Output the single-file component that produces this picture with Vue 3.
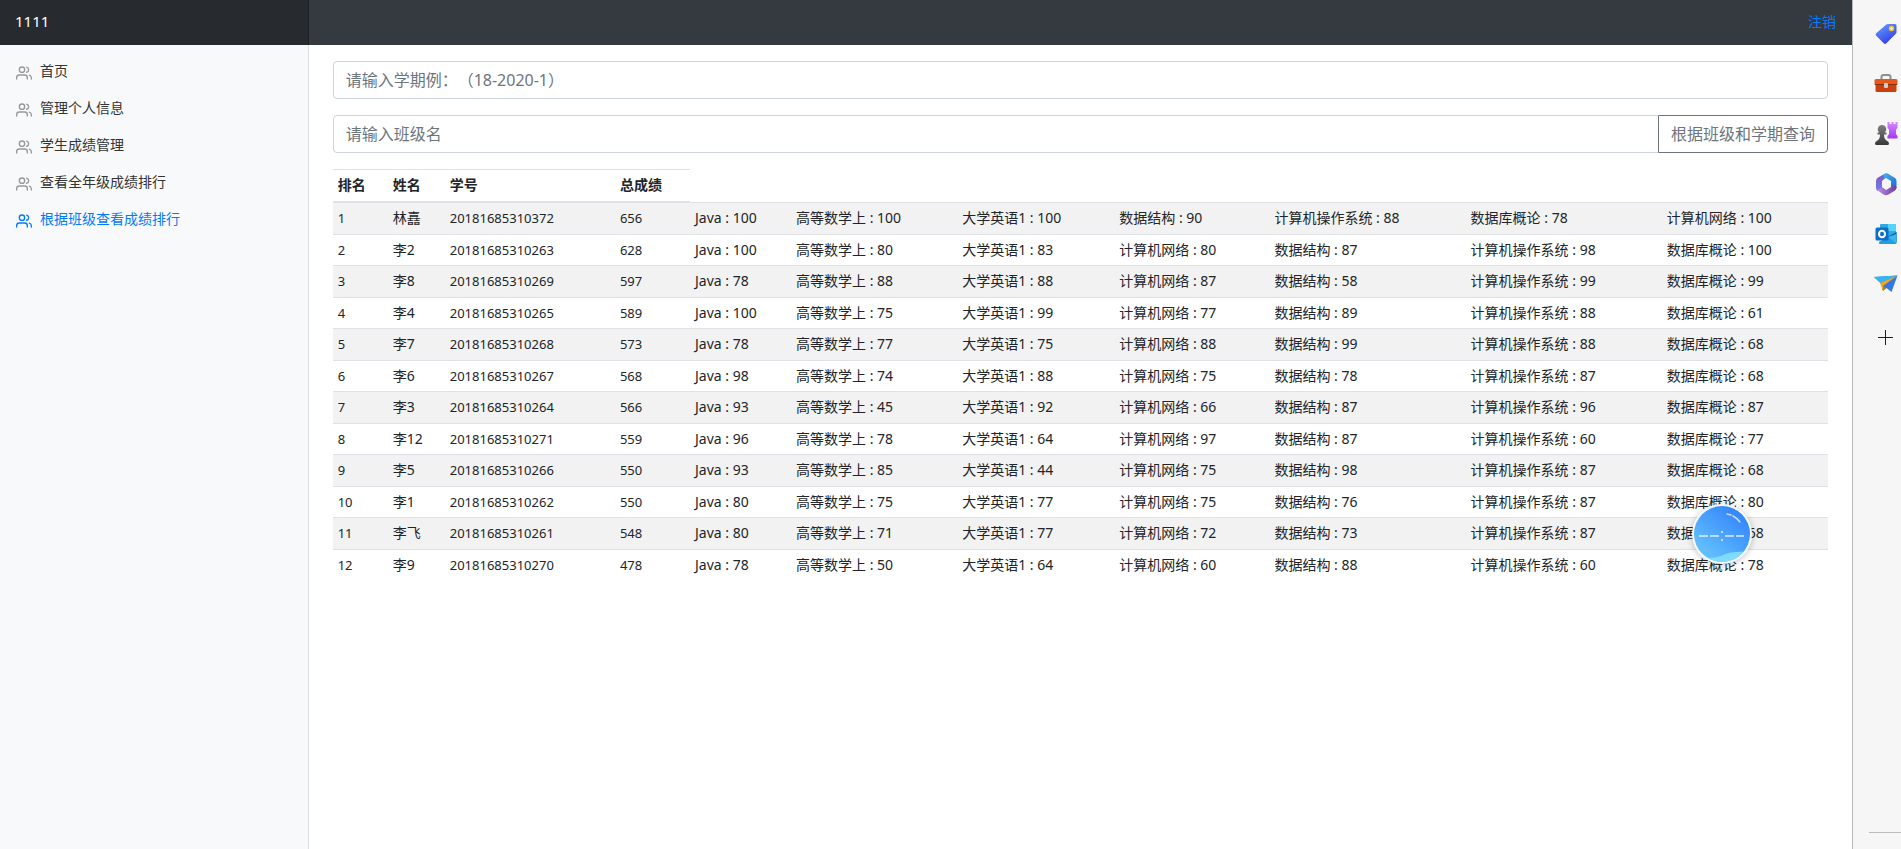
<script setup>
const menu = ['首页', '管理个人信息', '学生成绩管理', '查看全年级成绩排行', '根据班级查看成绩排行']
const current = 4
const heads = ['排名', '姓名', '学号', '总成绩']
const J = 'Java', G = '高等数学上', D = '大学英语1', W = '计算机网络', S = '数据结构', C = '计算机操作系统', K = '数据库概论'
const usual = [J, G, D, W, S, C, K]
const source = [
  ['林嚞', '20181685310372', 656, [100, 100, 100, 90, 88, 78, 100], [J, G, D, S, C, K, W]],
  ['李2', '20181685310263', 628, [100, 80, 83, 80, 87, 98, 100]],
  ['李8', '20181685310269', 597, [78, 88, 88, 87, 58, 99, 99]],
  ['李4', '20181685310265', 589, [100, 75, 99, 77, 89, 88, 61]],
  ['李7', '20181685310268', 573, [78, 77, 75, 88, 99, 88, 68]],
  ['李6', '20181685310267', 568, [98, 74, 88, 75, 78, 87, 68]],
  ['李3', '20181685310264', 566, [93, 45, 92, 66, 87, 96, 87]],
  ['李12', '20181685310271', 559, [96, 78, 64, 97, 87, 60, 77]],
  ['李5', '20181685310266', 550, [93, 85, 44, 75, 98, 87, 68]],
  ['李1', '20181685310262', 550, [80, 75, 77, 75, 76, 87, 80]],
  ['李飞', '20181685310261', 548, [80, 71, 77, 72, 73, 87, 68]],
  ['李9', '20181685310270', 478, [78, 50, 64, 60, 88, 60, 78]],
]
const rows = source.map(([name, no, total, scores, subjects = usual], i) => ({
  rank: i + 1, name, no, total,
  scores: scores.map((score, k) => ({ subject: subjects[k], score })),
}))
</script>

<template>
  <div class="window">
    <div class="page">
      <header class="bar">
        <a class="brand" href="#">1111</a>
        <a class="logout" href="#">注销</a>
      </header>
      <nav class="sidebar">
        <a v-for="(item, i) in menu" :key="item" href="#" class="item" :class="{ active: i === current }">
          <svg viewBox="0 0 24 24" width="16" height="16" fill="none" stroke="currentColor" stroke-width="2" stroke-linecap="round" stroke-linejoin="round" aria-hidden="true">
            <path d="M17 21v-2a4 4 0 0 0-4-4H5a4 4 0 0 0-4 4v2" />
            <circle cx="9" cy="7" r="4" />
            <path d="M23 21v-2a4 4 0 0 0-3-3.87M16 3.13a4 4 0 0 1 0 7.75" />
          </svg>
          <span>{{ item }}</span>
        </a>
      </nav>
      <main class="content">
        <input class="field" type="text" aria-label="学期" placeholder="请输入学期例：（18-2020-1）" />
        <div class="group">
          <input class="field" type="text" aria-label="班级名" placeholder="请输入班级名" />
          <button type="button" class="search">根据班级和学期查询</button>
        </div>
        <table class="scores">
          <colgroup>
            <col class="c-rank" /><col class="c-name" /><col class="c-no" /><col class="c-total" />
            <col class="c-java" /><col class="c-wide" /><col class="c-english" /><col class="c-mid" />
            <col class="c-long" /><col class="c-long" /><col class="c-wide" />
          </colgroup>
          <thead>
            <tr><th v-for="h in heads" :key="h" scope="col">{{ h }}</th></tr>
          </thead>
          <tbody>
            <tr v-for="r in rows" :key="r.no">
              <td><span class="num">{{ r.rank }}</span></td>
              <td>{{ r.name }}</td>
              <td><span class="num">{{ r.no }}</span></td>
              <td><span class="num">{{ r.total }}</span></td>
              <td v-for="s in r.scores" :key="s.subject">{{ s.subject }} : {{ s.score }}</td>
            </tr>
          </tbody>
        </table>
      </main>
      <div class="ball">
        <svg viewBox="0 0 60 60" width="60" height="60" aria-hidden="true">
          <defs>
            <linearGradient id="ball" x1="0.15" y1="0.9" x2="0.8" y2="0.1">
              <stop offset="0" stop-color="#66c4fd" /><stop offset="1" stop-color="#3485fc" />
            </linearGradient>
            <clipPath id="inside"><circle cx="30" cy="30" r="28" /></clipPath>
          </defs>
          <circle cx="30" cy="30" r="30" fill="#f4f9ff" />
          <circle cx="30" cy="30" r="28" fill="url(#ball)" />
          <path clip-path="url(#inside)" d="M9 54Q22 55 31 51T54 48V60H9Z" fill="#7fdcff" />
          <path d="M35 10l4 1M41 12q4 2 7 6" stroke="#c3e0ff" stroke-width="1.5" fill="none" stroke-linecap="round" />
          <path d="M7 32h9M18 32h9M33 32h9M44 32h8" stroke="#d9eeff" stroke-width="1.5" />
          <path d="M29 27h2v2h-2zM29 35h2v2h-2z" fill="#b9dfff" />
        </svg>
      </div>
    </div>

    <aside class="rail">
      <button type="button" aria-label="购物">
        <svg viewBox="0 0 24 24" width="24" height="24">
          <defs><linearGradient id="tag" x1="0" y1="0" x2="0.6" y2="1"><stop stop-color="#68a7ff" /><stop offset="1" stop-color="#343be8" /></linearGradient></defs>
          <path d="M14 2h7q1.500 0 1.500 1.500V10q0 1-.7 1.800l-9.500 9.500q-1.300 1.300-2.600 0L2.200 13.800q-1.300-1.300 0-2.600l9.800-8.500q.8-.7 2-.7z" fill="url(#tag)" />
          <circle cx="17.500" cy="6.500" r="2" fill="#dff0ff" stroke="#f5c32c" stroke-width="1.500" />
        </svg>
      </button>
      <button type="button" aria-label="工具">
        <svg viewBox="0 0 24 24" width="24" height="24">
          <path d="M7.500 8V5q0-2 2-2h5q2 0 2 2v3" fill="none" stroke="#8f8f8f" stroke-width="2" />
          <rect x="1.500" y="11" width="21" height="9" rx="1.500" fill="#c9420e" />
          <path d="M2 7h20q1.500 0 1.500 1.500V12q0 1-1 1h-21q-1 0-1-1V8.500Q.5 7 2 7z" fill="#e2581d" />
          <path d="M1 12.500h22" stroke="#8e2b08" />
          <rect x="10" y="11" width="4" height="5" rx="1" fill="#cfcfcf" />
        </svg>
      </button>
      <button type="button" aria-label="游戏">
        <svg viewBox="0 0 24 24" width="24" height="24">
          <defs>
            <linearGradient id="rook" x1="0" y1="0" x2="0" y2="1"><stop stop-color="#d78bff" /><stop offset="1" stop-color="#a238ee" /></linearGradient>
            <linearGradient id="pawn" x1="0" y1="0" x2="0" y2="1"><stop stop-color="#808080" /><stop offset="1" stop-color="#383838" /></linearGradient>
          </defs>
          <path d="M13.500 0h2v2h2V0h2v2h2V0h2v6L22 7.500V12l1.500 2v2.500h-10V14l1.500-2V7.500L13.500 6z" fill="url(#rook)" />
          <path d="M8 3a4.200 4.200 0 0 1 2.600 7.500h1.900v2H10q0 4.500 2.500 6 2.500 1 2.500 3 0 1.500-1.500 1.500h-11Q1 23 1 21.500q0-2 2.500-3Q6 17 6 12.500H3.500v-2h1.900A4.200 4.200 0 0 1 8 3z" fill="url(#pawn)" />
        </svg>
      </button>
      <button type="button" aria-label="办公">
        <svg viewBox="0 0 24 24" width="24" height="24">
          <defs>
            <linearGradient id="o1" x1="0" y1="0" x2="1" y2="1"><stop stop-color="#42b3ee" /><stop offset="1" stop-color="#2267d4" /></linearGradient>
            <linearGradient id="o2" x1="0" y1="0" x2="0" y2="1"><stop stop-color="#8551c5" /><stop offset="1" stop-color="#6b83ea" /></linearGradient>
            <linearGradient id="o3" x1="0" y1="0" x2="1" y2="0"><stop stop-color="#c58be5" /><stop offset="1" stop-color="#654099" /></linearGradient>
          </defs>
          <path d="M10 2.200 4 5.600Q2 6.800 2 9v7q0 2 1.800 3L8 17V9l7-6.800Q12.500.8 10 2.200z" fill="url(#o2)" />
          <path d="M9.500 2.500Q12 .8 14.500 2L21 6q1.500 1 1.500 3v7L17 13V9l-5-3-2 1z" fill="url(#o1)" />
          <path d="M3 18l6-3 3 3 5-3v-3l5.500 3q.2 2.500-1.500 3.500l-6.500 4q-2.500 1.300-5 0z" fill="url(#o3)" />
          <path d="M12 8l4 2v5l-4 2.500L8 15v-5z" fill="#f6f6f6" />
        </svg>
      </button>
      <button type="button" aria-label="邮件">
        <svg viewBox="0 0 24 24" width="24" height="24">
          <rect x="6" y="2" width="16" height="16" rx="1" fill="#31a9e8" />
          <path d="M14 2h7q1 0 1 1v6h-8z" fill="#55d3fa" /><path d="M6 9h8v6H6z" fill="#1268b4" />
          <path d="M5 20 22.500 10v11q0 1-1 1H6q-1 0-1-1z" fill="#239ce2" />
          <path d="M14 14.800 22.500 20v-10z" fill="#145a9f" /><path d="M14 15l8.500 6.500V12z" fill="#35b7ef" />
          <rect x="1.500" y="5.500" width="13" height="13" rx="1.500" fill="#0b6fc7" />
          <ellipse cx="8" cy="12" rx="3" ry="3.300" fill="none" stroke="#fff" stroke-width="2" />
        </svg>
      </button>
      <button type="button" aria-label="发送">
        <svg viewBox="0 0 24 24" width="24" height="24">
          <path d="M0 5 23.500 3.500 17.500 20l-5-4-4 2.500-.5-6z" fill="#3177e8" />
          <path d="M0 5 23.500 3.500 6.500 11z" fill="#35b5f1" />
          <path d="M6 11 23.500 3.500 9 14v5z" fill="#f5a51b" /><path d="M9 14v5l3.500-3z" fill="#c77908" />
        </svg>
      </button>
      <button type="button" class="add" aria-label="添加">
        <svg viewBox="0 0 24 24" width="24" height="24"><path d="M11.500 4v15M4 11.500h15" stroke="#1c1c1c" /></svg>
      </button>
      <hr />
    </aside>
  </div>
</template>

<style>
body { margin: 0; background: #fff; }
</style>

<style scoped>
.window {
  display: flex;
  min-height: 100vh;
  overflow: hidden;
  font-family: "Noto Sans", "Noto Sans CJK SC", sans-serif;
  font-size: 14px;
  line-height: 21px;
  color: #212529;
}
.window *, .window *::before { box-sizing: border-box; }
a { text-decoration: none; }
input, button { font: inherit; margin: 0; }
.page {
  position: relative;
  flex: 1;
  min-width: 0;
  display: grid;
  grid-template-columns: minmax(0, 1fr) minmax(0, 5fr);
  grid-template-rows: 45px 1fr;
}
.bar {
  grid-column: 1 / -1;
  display: grid;
  grid-template-columns: subgrid;
  align-items: center;
  background: #343a40;
}
.brand {
  align-self: stretch;
  padding: 0 15px;
  font-size: 15px;
  line-height: 42px;
  color: #fff;
  background: rgba(0, 0, 0, .25);
  box-shadow: inset -1px 0 0 rgba(0, 0, 0, .25);
}
.logout { justify-self: end; padding: 0 16px 2px 0; color: #007bff; }
.sidebar {
  padding-top: 7px;
  background: #f8f9fa;
  box-shadow: inset -1px 0 0 rgba(0, 0, 0, .1);
}
.item {
  display: flex;
  align-items: center;
  gap: 8px;
  padding: 8px 16px;
  color: #333;
}
.item svg { color: #999; margin-top: 4px; }
.item.active, .item.active svg { color: #007bff; }
.content { padding: 16px 24px; }
.field {
  display: block;
  width: 100%;
  height: 38px;
  padding: 6px 12px;
  font-size: 16px;
  color: #495057;
  background: #fff;
  border: 1px solid #ced4da;
  border-radius: 4px;
  text-spacing-trim: space-all;
}
.field::placeholder { color: #6c757d; opacity: 1; }
.group { display: flex; margin: 16px 0; }
.group .field { flex: 1; min-width: 0; border-radius: 4px 0 0 4px; }
.search {
  margin-left: -1px;
  padding: 0 12px;
  font-size: 16px;
  color: #6c757d;
  background: #fff;
  border: 1px solid #6c757d;
  border-radius: 0 4px 4px 0;
  white-space: nowrap;
}
.scores {
  width: 100%;
  table-layout: fixed;
  border-collapse: collapse;
}
th, td {
  padding: 4px 5px 5px;
  text-align: left;
  white-space: nowrap;
  border-top: 1px solid #dee2e6;
}
th { line-height: 22px; border-bottom: 2px solid #dee2e6; }
td { line-height: 1.54; }
tbody tr:nth-child(odd) { background: rgba(0, 0, 0, .05); }
.num { font-size: 13px; line-height: 1; }
.c-rank { width: 55px; }
.c-name { width: 57px; }
.c-no { width: 170px; }
.c-total { width: 75px; }
.c-java { width: 101px; }
.c-wide { width: 166px; }
.c-english { width: 157px; }
.c-mid { width: 155px; }
.c-long { width: 196px; }
.ball {
  position: absolute;
  right: 100px;
  top: 504px;
  width: 60px;
  height: 60px;
  border-radius: 50%;
  box-shadow: 0 1px 6px rgba(0, 0, 0, .25);
}
.rail {
  flex: none;
  width: 49px;
  display: flex;
  flex-direction: column;
  align-items: flex-end;
  gap: 26px;
  padding: 22px 3px 16px 0;
  background: #f6f6f6;
  border-left: 1px solid #b9b9b9;
}
.rail button { display: flex; padding: 0; border: 0; background: none; }
.rail .add { margin-top: 4px; }
.rail hr { width: 32px; margin: auto -3px 0 0; border: 0; border-top: 1px solid #bbb; }
</style>
